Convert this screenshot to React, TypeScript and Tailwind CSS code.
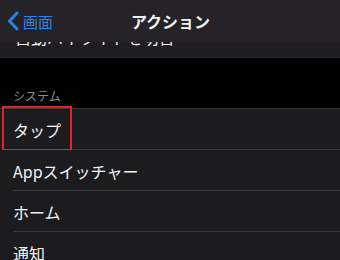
import React from "react";

const jp = { fontFamily: '"Noto Sans CJK JP", "Noto Sans", sans-serif' };

function Row({ label, last, children }: { label: string; last?: boolean; children?: React.ReactNode }) {
  return (
    <div className="relative bg-[#1c1c1e] h-[41px] flex items-center pl-[13px]">
      <span className="text-[16px] text-[#f2f2f2] leading-none">{label}</span>
      {!last && <div className="absolute bottom-0 left-[13px] right-0 h-px bg-[#38383a]" />}
      {children}
    </div>
  );
}

export default function App() {
  return (
    <div className="relative w-[340px] h-[260px] overflow-hidden bg-black" style={jp}>
      <div className="absolute top-0 left-0 right-0 h-[42px] bg-[#252327] z-10 flex items-center">
        <div className="flex items-center pl-[6px]">
          <svg width="14" height="22" viewBox="0 0 14 22" className="mr-[3px]">
            <polyline points="11,3 3.5,11 11,19" fill="none" stroke="#2a84e6" strokeWidth="3" strokeLinecap="round" strokeLinejoin="round" />
          </svg>
          <span className="text-[15px] text-[#2a84e6] leading-none">画面</span>
        </div>
        <div className="absolute inset-0 flex items-center justify-center">
          <span className="text-[16px] font-semibold text-[#f2f2f2] leading-none pl-[1px]">アクション</span>
        </div>
      </div>

      <div className="pt-[17px]">
        <div className="bg-[#1f1d21] h-[41px] flex items-center pl-[15px] border-b border-[#2c2a2e]">
          <span className="text-[16px] text-[#f2f2f2] leading-none">自動ハイライトを切替</span>
        </div>
        <div className="h-[50px] flex items-end pl-[13px] pb-[6px]">
          <span className="text-[12px] text-[#8d8d93] leading-none">システム</span>
        </div>
        <div className="border-t border-[#38383a]">
          <Row label="タップ">
            <div className="absolute left-[2px] -top-[3px] w-[70px] h-[45px] border-2 border-[#e0262b]" />
          </Row>
          <Row label="Appスイッチャー" />
          <Row label="ホーム" />
          <Row label="通知" />
        </div>
      </div>
    </div>
  );
}
